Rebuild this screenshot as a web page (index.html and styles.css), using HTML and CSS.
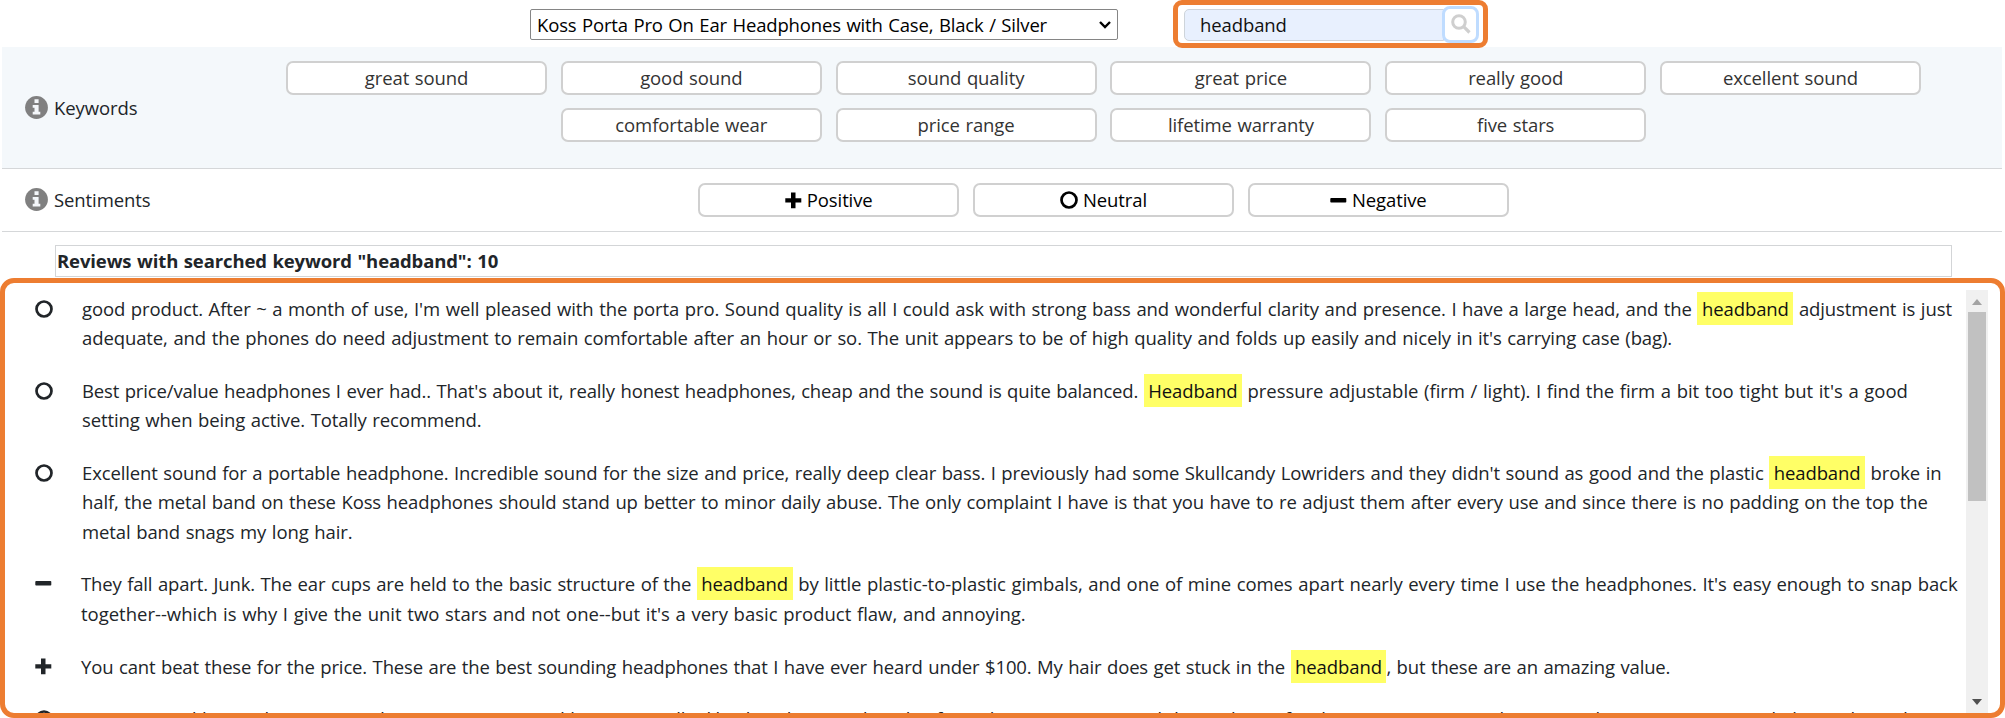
FILE: index.html
```
<!DOCTYPE html>
<html lang="en">
<head>
<meta charset="utf-8">
<title>Review explorer</title>
<link rel="stylesheet" href="styles.css">
</head>
<body>
<svg class="defs" width="0" height="0" aria-hidden="true">
  <symbol id="plus" viewBox="0 0 17 17"><path d="M6 .5h4.500V6.200H16.300v4.200H10.500v5.800H6v-5.800H.3V6.200H6z"/></symbol>
  <symbol id="minus" viewBox="0 0 17 17"><rect x=".3" y="6.100" width="16" height="4.400" rx=".8"/></symbol>
  <symbol id="circle" viewBox="0 0 18 18"><circle cx="9" cy="9" r="7.500" fill="none" stroke="currentColor" stroke-width="2.700"/></symbol>
  <symbol id="info" viewBox="0 0 23 23"><circle cx="11.500" cy="11.500" r="11.400"/><path fill="#f4f7fa" d="M9.500 3.200h4.100v3.800H9.500zM7.700 9h5.900v6.700h1.700v2.800H7.700v-2.800h1.800v-3.900H7.700z"/></symbol>
</svg>
<header class="topbar">
  <div class="picker">
    <span>Koss Porta Pro On Ear Headphones with Case, Black / Silver</span>
    <svg width="12" height="8" viewBox="0 0 12 8"><path d="M1 1l5 5 5-5" fill="none" stroke="#000" stroke-width="2.400"/></svg>
  </div>
  <div class="search">
    <div class="field">headband</div>
    <button class="go" aria-label="Search"><svg width="20" height="20" viewBox="0 0 20 20"><circle cx="8" cy="8" r="6.300" stroke-width="3"/><path d="M12.700 12.700l5.800 5.800" stroke-width="3.200"/></svg></button>
  </div>
</header>
<section class="row keywords">
  <div class="label"><svg><use href="#info"/></svg>Keywords</div>
  <div class="chips">
    <span class="chip">great sound</span><span class="chip">good sound</span><span class="chip">sound quality</span><span class="chip">great price</span><span class="chip">really good</span><span class="chip">excellent sound</span>
    <span class="chip">comfortable wear</span><span class="chip">price range</span><span class="chip">lifetime warranty</span><span class="chip">five stars</span>
  </div>
</section>
<section class="row sentiments">
  <div class="label"><svg><use href="#info"/></svg>Sentiments</div>
  <div class="chips">
    <span class="chip"><svg><use href="#plus"/></svg>Positive</span><span class="chip"><svg class="ring"><use href="#circle"/></svg>Neutral</span><span class="chip"><svg><use href="#minus"/></svg>Negative</span>
  </div>
</section>
<h1 class="heading"><span>Reviews with searched keyword "headband": 10</span></h1>
<main class="panel">
  <div class="list">
    <article class="review"><svg class="ring"><use href="#circle"/></svg>
      <p><span class="line">good product. After ~ a month of use, I'm well pleased with the porta pro. Sound quality is all I could ask with strong bass and wonderful clarity and presence. I have a large head, and the <mark>headband</mark> adjustment is just</span>
      <span class="line">adequate, and the phones do need adjustment to remain comfortable after an hour or so. The unit appears to be of high quality and folds up easily and nicely in it's carrying case (bag).</span></p></article>
    <article class="review"><svg class="ring"><use href="#circle"/></svg>
      <p><span class="line"><span class="snug">Best price/value headphones I ever had.. That's about it, really honest headphones, cheap and the sound is quite balanced. </span><mark>Headband</mark><span class="loose"> pressure adjustable (firm / light). I find the firm a bit too tight but it's a good</span></span>
      <span class="line">setting when being active. Totally recommend.</span></p></article>
    <article class="review"><svg class="ring"><use href="#circle"/></svg>
      <p><span class="line close">Excellent sound for a portable headphone. Incredible sound for the size and price, really deep clear bass. I previously had some Skullcandy Lowriders and they didn't sound as good and the plastic <mark>headband</mark> broke in</span>
      <span class="line close">half, the metal band on these Koss headphones should stand up better to minor daily abuse. The only complaint I have is that you have to re adjust them after every use and since there is no padding on the top the</span>
      <span class="line">metal band snags my long hair.</span></p></article>
    <article class="review"><svg><use href="#minus"/></svg>
      <p><span class="line"><span class="snug">They fall apart. Junk. The ear cups are held to the basic structure of the </span><mark>headband</mark><span class="airy"> by little plastic-to-plastic gimbals, and one of mine comes apart nearly every time I use the headphones. It's easy enough to snap back</span></span>
      <span class="line looser">together--which is why I give the unit two stars and not one--but it's a very basic product flaw, and annoying.</span></p></article>
    <article class="review"><svg><use href="#plus"/></svg>
      <p><span class="line snug">You cant beat these for the price. These are the best sounding headphones that I have ever heard under $100. My hair does get stuck in the <mark>headband</mark>, but these are an amazing value.</span></p></article>
    <article class="review"><svg class="ring"><use href="#circle"/></svg>
      <p><span class="line">it was a good buy with great sound, a very nice pair and better overall. I like, but the sound quality from these was super and down almost for the money spent. In the case with any new one, I and I know the sad</span></p></article>
  </div>
  <div class="scrollbar">
    <svg width="10" height="6" viewBox="0 0 10 6"><path d="M0 6l5-6 5 6z" fill="#a3a3a3"/></svg>
    <div class="thumb"></div>
    <svg class="down" width="10" height="6" viewBox="0 0 10 6"><path d="M0 0h10L5 6z" fill="#505050"/></svg>
  </div>
</main>
</body>
</html>
```
FILE: styles.css
```
* { box-sizing: border-box; }
body { margin: 0; height: 718px; overflow: hidden; background: #fff; color: #212529; font: 18.5px/29.33px "Open Sans", "Noto Sans", sans-serif; letter-spacing: -.1px; word-spacing: .9px; display: flex; flex-direction: column; }
.defs { position: absolute; }
svg { flex: none; fill: currentColor; }
.topbar { height: 47px; display: flex; align-items: flex-start; padding-left: 530px; z-index: 1; }
.picker { width: 588px; height: 31px; margin-top: 9px; border: 1.500px solid #858585; border-radius: 2px; display: flex; align-items: center; justify-content: space-between; padding: 0 6px; color: #000; letter-spacing: -.16px; white-space: nowrap; }
.search { margin-left: 55px; width: 315px; height: 48px; border: 5px solid #ed7d31; border-radius: 9px; display: flex; align-items: center; padding: 0 3px 0 6px; }
.field { width: 260px; height: 32px; margin-top: 1px; border: 1px solid #ced4da; border-radius: 5px 0 0 5px; background: #e8f0fe; color: #111; line-height: 30px; padding-left: 15px; }
.go { width: 37px; height: 37px; margin: 0 0 0 -2px; padding: 0; border: 3px solid #bfdcff; border-radius: 8px; background: #fff; display: grid; place-items: center; }
.go svg { fill: none; stroke: #cfcfcf; }
.row { margin: 0 3px 0 2px; border-bottom: 1px solid #d5d7d9; display: flex; align-items: flex-start; }
.keywords { height: 122px; background: #f4f8fb; padding-top: 14px; }
.sentiments { height: 63px; padding-top: 14px; }
.label { width: 271px; display: flex; gap: 6px; padding-left: 23px; height: 34px; align-items: center; }
.keywords .label { margin-top: 30px; }
.label svg { width: 23px; height: 23px; color: #808080; margin-top: -2px; }
.chips { width: 1661px; display: flex; flex-wrap: wrap; justify-content: center; gap: 13px 13.800px; }
.chip { width: 261px; height: 34px; border: 2px solid #d0d0d0; border-radius: 7px; background: #fff; display: flex; align-items: center; justify-content: center; color: #333; }
.sentiments .chip { color: #000; gap: 5px; }
.chip svg { width: 17px; height: 17px; }
.chip svg.ring { width: 18px; height: 18px; }
.heading { margin: 13px 53px 0 55px; height: 32px; border: 1px solid #d3d5d7; font-size: 18.5px; line-height: 30px; letter-spacing: -.12px; padding-left: 1px; flex: none; }
.panel { margin-top: 1px; height: 440px; flex: none; border: 5px solid #ed7d31; border-radius: 14px; display: flex; justify-content: space-between; padding: 7px 12px 0 30px; overflow: hidden; }
.list { width: 1925px; padding-top: 4px; }
.review { display: flex; height: auto; margin-bottom: 23.400px; }
.review p { margin: 0 0 0 29px; }
.review svg { width: 17px; height: 17px; margin-top: 6px; }
.review svg.ring { width: 18px; height: 18px; }
.line { display: block; height: 29.330px; white-space: nowrap; }
.snug { letter-spacing: -.15px; }
.close { letter-spacing: -.125px; }
.airy { letter-spacing: -.07px; }
.loose { letter-spacing: -.04px; }
.looser { letter-spacing: -.01px; }
mark { background: #ffff66; color: #111; padding: 4px 4.500px; letter-spacing: -.1px; }
.scrollbar { width: 22px; height: 423px; background: #f0f0f0; display: flex; flex-direction: column; align-items: center; padding: 9px 0 8px; }
.thumb { width: 18px; height: 189px; background: #c1c1c1; margin-top: 7px; }
.down { margin-top: auto; }
```
